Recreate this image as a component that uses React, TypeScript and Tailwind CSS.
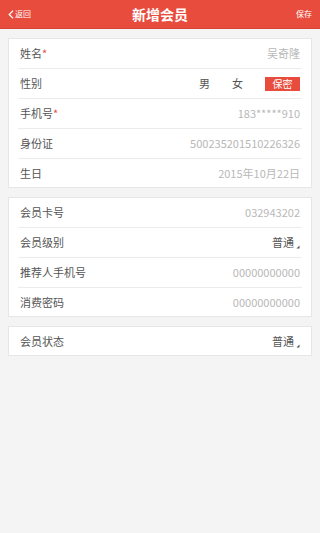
import React from "react";

const font = { fontFamily: '"Noto Sans CJK SC", "Liberation Sans", sans-serif' };

function Corner() {
  return (
    <svg width="4" height="4" viewBox="0 0 4 4" className="ml-[2px] mt-[9px]">
      <polygon points="3.5,0.5 3.5,3.5 0.5,3.5" fill="#555" />
    </svg>
  );
}

function Row({ label, req, children, last }: { label: string; req?: boolean; children?: React.ReactNode; last?: boolean }) {
  return (
    <div
      className={`mx-[9px] flex items-center justify-between px-[2px] ${last ? "h-[28px]" : "h-[30px]"}`}
      style={{ borderBottom: last ? "none" : "1px solid #ececec" }}
    >
      <div className="flex items-center text-[11px] text-[#555]">
        {label}
        {req && <span className="text-[#e84c3d]">*</span>}
      </div>
      <div className="flex items-center text-[11px] text-[#b8b8b8]">{children}</div>
    </div>
  );
}

export default function App() {
  return (
    <div className="min-h-[533px] w-[320px] bg-[#f4f4f4]" style={font}>
      <div className="flex h-[29px] items-center justify-between bg-[#e84c3d] px-[8px] text-white border-b border-[#d94335]">
        <div className="flex w-[40px] items-center text-[8px]">
          <svg width="6" height="9" viewBox="0 0 6 9" className="mr-[1px]">
            <polyline points="5,0.8 1.2,4.5 5,8.2" fill="none" stroke="white" strokeWidth="1.2" />
          </svg>
          返回
        </div>
        <div className="text-[14px] font-bold">新增会员</div>
        <div className="w-[40px] text-right text-[8px]">保存</div>
      </div>

      <div className="mx-[8px] mt-[9px] border border-[#e6e6e6] bg-white">
        <Row label="姓名" req>吴奇隆</Row>
        <Row label="性别">
          <span className="mr-[22px] text-[#555]">男</span>
          <span className="mr-[22px] text-[#555]">女</span>
          <span className="flex h-[14px] w-[35px] items-center justify-center bg-[#e84c3d] text-[10px] text-white">保密</span>
        </Row>
        <Row label="手机号" req>183*****910</Row>
        <Row label="身份证">500235201510226326</Row>
        <Row label="生日" last>2015年10月22日</Row>
      </div>

      <div className="mx-[8px] mt-[9px] border border-[#e6e6e6] bg-white">
        <Row label="会员卡号">032943202</Row>
        <Row label="会员级别">
          <span className="text-[#555]">普通</span>
          <Corner />
        </Row>
        <Row label="推荐人手机号">00000000000</Row>
        <Row label="消费密码" last>00000000000</Row>
      </div>

      <div className="mx-[8px] mt-[9px] border border-[#e6e6e6] bg-white">
        <Row label="会员状态" last>
          <span className="text-[#555]">普通</span>
          <Corner />
        </Row>
      </div>
    </div>
  );
}
